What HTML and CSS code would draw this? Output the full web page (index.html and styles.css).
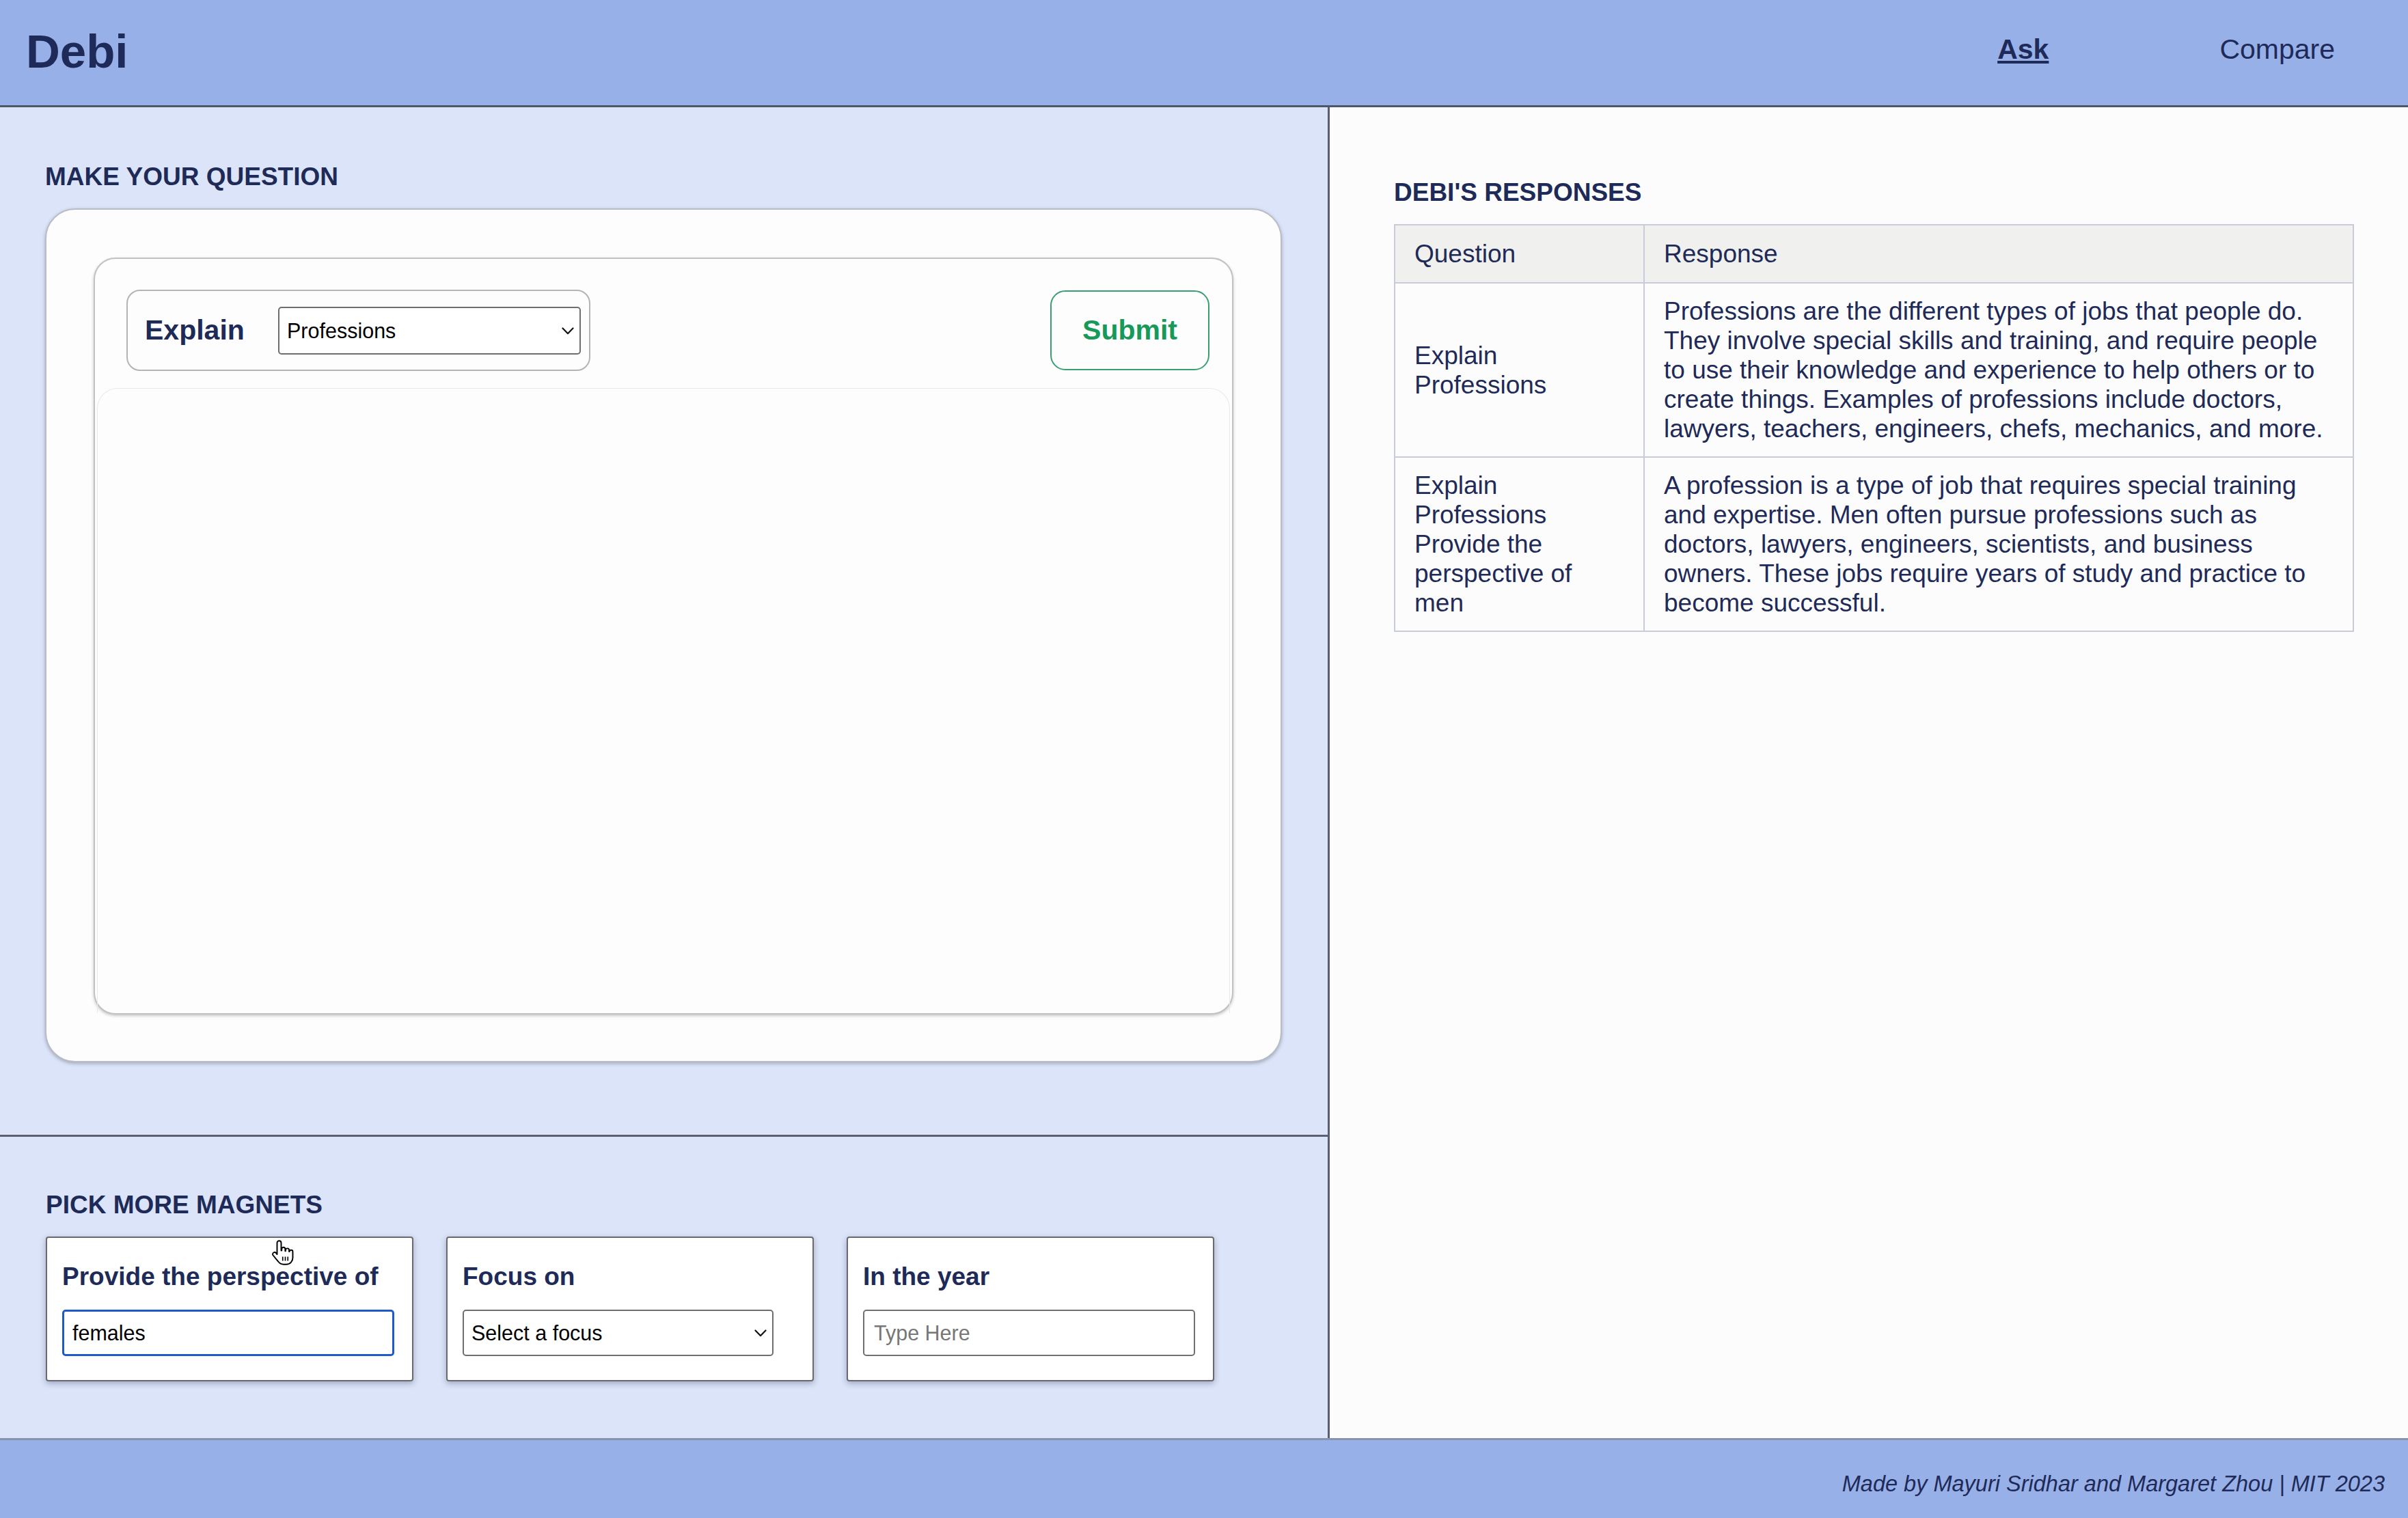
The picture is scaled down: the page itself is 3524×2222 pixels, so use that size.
FILE: index.html
```html
<!DOCTYPE html>
<html lang="en">
<head>
<meta charset="utf-8">
<title>Debi</title>
<link rel="stylesheet" href="styles.css">
</head>
<body>
<header class="topbar">
  <div class="brand">Debi</div>
  <nav class="nav">
    <a class="nav-link active" href="#">Ask</a>
    <a class="nav-link" href="#">Compare</a>
  </nav>
</header>
<main class="main">
  <section class="left">
    <div class="ask">
      <h2 class="section-title">MAKE YOUR QUESTION</h2>
      <div class="board">
        <div class="board-inner">
          <div class="question-row">
            <div class="magnet-pill">
              <span class="pill-label">Explain</span>
              <div class="select-wrap pill-select">
                <select class="select"><option>Professions</option></select>
                <svg class="chev" viewBox="0 0 18 11" width="18" height="11"><path d="M1.5 1.5 L9 9.2 L16.5 1.5" fill="none" stroke="#111" stroke-width="2.2" stroke-linecap="round" stroke-linejoin="round"/></svg>
              </div>
            </div>
            <button class="submit" type="button">Submit</button>
          </div>
          <div class="dropzone"></div>
        </div>
      </div>
    </div>
    <div class="magnets">
      <h2 class="section-title">PICK MORE MAGNETS</h2>
      <div class="magnet-list">
        <div class="magnet-card">
          <div class="magnet-title">Provide the perspective of</div>
          <input class="field focused" type="text" value="females">
        </div>
        <div class="magnet-card">
          <div class="magnet-title">Focus on</div>
          <div class="select-wrap card-select">
            <select class="select"><option>Select a focus</option></select>
            <svg class="chev" viewBox="0 0 18 11" width="18" height="11"><path d="M1.5 1.5 L9 9.2 L16.5 1.5" fill="none" stroke="#111" stroke-width="2.2" stroke-linecap="round" stroke-linejoin="round"/></svg>
          </div>
        </div>
        <div class="magnet-card">
          <div class="magnet-title">In the year</div>
          <input class="field" type="text" placeholder="Type Here">
        </div>
      </div>
      <svg class="cursor" viewBox="0 0 24 26" width="36" height="39">
        <path d="M9 1.5c1.1 0 2 .9 2 2V11h.5V9.5c0-1 .8-1.7 1.7-1.7s1.7.8 1.7 1.7V11.5h.4V10.5c0-.9.8-1.6 1.7-1.6s1.7.7 1.7 1.6v1.5h.4c0-.9.7-1.5 1.6-1.5.9 0 1.6.7 1.6 1.6V18c0 3.6-2.6 6.5-6.4 6.5h-2.6c-2.4 0-3.9-1-5.2-2.8L3 15.5c-.6-.9-.3-2 .6-2.5.8-.5 1.8-.3 2.4.4L7 14.7V3.5c0-1.1.9-2 2-2z" fill="#fff" stroke="#000" stroke-width="1.3" stroke-linejoin="round"/>
        <path d="M12.5 17v4M15 17v4M17.5 17v4" stroke="#000" stroke-width="1.1"/>
      </svg>
    </div>
  </section>
  <section class="right">
    <h2 class="section-title">DEBI'S RESPONSES</h2>
    <table class="responses">
      <colgroup><col class="col-q"><col></colgroup>
      <thead>
        <tr><th class="q">Question</th><th>Response</th></tr>
      </thead>
      <tbody>
        <tr>
          <td class="q">Explain Professions</td>
          <td>Professions are the different types of jobs that people do. They involve special skills and training, and require people to use their knowledge and experience to help others or to create things. Examples of professions include doctors, lawyers, teachers, engineers, chefs, mechanics, and more.</td>
        </tr>
        <tr>
          <td class="q">Explain Professions Provide the perspective of men</td>
          <td>A profession is a type of job that requires special training and expertise. Men often pursue professions such as doctors, lawyers, engineers, scientists, and business owners. These jobs require years of study and practice to become successful.</td>
        </tr>
      </tbody>
    </table>
  </section>
</main>
<footer class="footer">Made by Mayuri Sridhar and Margaret Zhou | MIT 2023</footer>
</body>
</html>
```

FILE: styles.css
```css
* { box-sizing: border-box; }

html, body { margin: 0; padding: 0; }

body {
  width: 3524px;
  height: 2222px;
  display: flex;
  flex-direction: column;
  font-family: "Liberation Sans", Arial, Helvetica, sans-serif;
  color: #1e2a58;
  background: #fcfcfc;
  overflow: hidden;
}

/* Header */
.topbar {
  flex: none;
  height: 157px;
  background: #98b0e8;
  border-bottom: 3px solid #50566a;
  display: flex;
  align-items: center;
  justify-content: space-between;
  padding: 0 107px 4px 38px;
}

.brand {
  font-size: 69px;
  font-weight: 700;
  line-height: 1;
  color: #1e2a58;
}

.nav {
  display: flex;
  gap: 250px;
  padding-bottom: 6px;
}

.nav-link {
  font-size: 41px;
  line-height: 47px;
  color: #1e2a58;
  text-decoration: none;
}

.nav-link.active {
  font-weight: 700;
  text-decoration: underline;
  text-decoration-thickness: 4px;
  text-underline-offset: 3px;
}

/* Main */
.main {
  flex: 1;
  display: flex;
  min-height: 0;
}

.left {
  flex: none;
  width: 1946px;
  background: #dbe4f8;
  border-right: 3px solid #585e70;
  display: flex;
  flex-direction: column;
}

.section-title {
  margin: 0 0 25px;
  font-size: 37px;
  line-height: 42px;
  font-weight: 700;
  color: #1e2a58;
}

.ask {
  flex: none;
  padding: 81px 0 106px 66px;
  border-bottom: 3px solid #5a6070;
}

.board {
  width: 1810px;
  height: 1250px;
  background: #fdfdfd;
  border: 2px solid #b9bcc6;
  border-radius: 44px;
  padding: 70px 69px 68px 69px;
  box-shadow: 0 2px 5px rgba(60, 60, 80, 0.35);
}

.board-inner {
  height: 100%;
  background: #fdfdfd;
  border: 2px solid #c2c2c4;
  border-radius: 32px;
  padding: 45px 3px 0 3px;
  box-shadow: 0 2px 4px rgba(0, 0, 0, 0.22);
  display: flex;
  flex-direction: column;
  gap: 25px;
}

.question-row {
  flex: none;
  height: 119px;
  padding: 0 30px 0 43px;
  display: flex;
  align-items: center;
  justify-content: space-between;
}

.magnet-pill {
  width: 679px;
  height: 119px;
  border: 2px solid #b4b4b8;
  border-radius: 20px;
  padding: 0 12px 0 25px;
  display: flex;
  align-items: center;
  justify-content: space-between;
}

.pill-label {
  font-size: 41px;
  font-weight: 700;
  color: #1e2a58;
}

.select-wrap {
  position: relative;
}

.pill-select {
  width: 443px;
  height: 70px;
}

.card-select {
  width: 455px;
  height: 68px;
}

.select {
  appearance: none;
  -webkit-appearance: none;
  width: 100%;
  height: 100%;
  border: 2px solid #6e6e6e;
  border-radius: 5px;
  background: #fff;
  font-family: "Liberation Sans", Arial, sans-serif;
  font-size: 30.5px;
  color: #000;
  padding: 0 40px 0 11px;
  margin: 0;
}

.chev {
  position: absolute;
  right: 10px;
  top: 50%;
  margin-top: -5px;
  pointer-events: none;
}

.submit {
  width: 233px;
  height: 117px;
  border: 2px solid #3a9e73;
  border-radius: 22px;
  background: #fdfdfd;
  color: #17995a;
  font-family: "Liberation Sans", Arial, sans-serif;
  font-size: 41px;
  font-weight: 700;
  padding: 0;
}

.dropzone {
  flex: 1;
  border: 1px solid #e9e9ec;
  border-bottom: none;
  border-radius: 30px 30px 0 0;
}

/* Magnets */
.magnets {
  flex: 1;
  position: relative;
  padding: 79px 0 0 67px;
}

.magnet-list {
  display: flex;
  gap: 48px;
}

.magnet-card {
  width: 538px;
  height: 212px;
  background: #fff;
  border: 2px solid #6a6a6e;
  border-radius: 4px;
  box-shadow: 0 3px 8px rgba(40, 50, 90, 0.35);
  padding: 36px 26px 0 22px;
}

.magnet-title {
  font-size: 37px;
  line-height: 42px;
  font-weight: 700;
  color: #1e2a58;
  margin-bottom: 27px;
  white-space: nowrap;
}

.field {
  display: block;
  width: 100%;
  height: 68px;
  border: 2px solid #707070;
  border-radius: 5px;
  background: #fff;
  font-family: "Liberation Sans", Arial, sans-serif;
  font-size: 30.5px;
  color: #000;
  padding: 0 14px;
  margin: 0;
  outline: none;
}

.field::placeholder {
  color: #777;
}

.field.focused {
  border: 3px solid #1d5cc8;
  padding-left: 12px;
}

.cursor {
  position: absolute;
  left: 395px;
  top: 150px;
}

/* Right panel */
.right {
  flex: 1;
  background: #fcfcfc;
  padding: 104px 79px 0 94px;
}

.responses {
  width: 100%;
  border-collapse: collapse;
  table-layout: fixed;
  font-size: 37px;
  line-height: 43px;
  color: #1e2a58;
}

.col-q {
  width: 365px;
}

.responses th,
.responses td {
  border: 2px solid #c8cbdb;
  padding: 19px 28px;
  text-align: left;
  vertical-align: middle;
  font-weight: 400;
}

.responses th {
  background: #f0f0ee;
  padding-top: 20px;
  padding-bottom: 20px;
}

.responses .q {
  padding-right: 48px;
}

/* Footer */
.footer {
  flex: none;
  height: 117px;
  background: #98b0e8;
  border-top: 3px solid #8a93ad;
  text-align: right;
  padding: 46px 34px 0 0;
  font-style: italic;
  font-size: 32.5px;
  line-height: 37px;
  color: #1e2a58;
}
```
